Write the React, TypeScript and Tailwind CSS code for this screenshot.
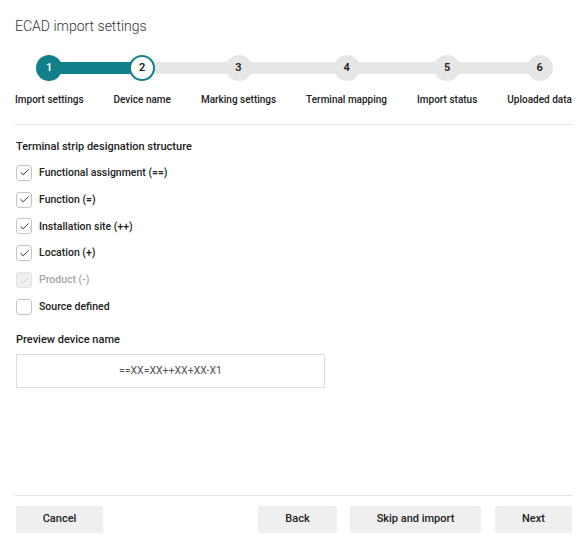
import { Check } from 'lucide-react';

const STEPS = [
  'Import settings',
  'Device name',
  'Marking settings',
  'Terminal mapping',
  'Import status',
  'Uploaded data',
];

const OPTIONS: { label: string; checked: boolean; disabled?: boolean }[] = [
  { label: 'Functional assignment (==)', checked: true },
  { label: 'Function (=)', checked: true },
  { label: 'Installation site (++)', checked: true },
  { label: 'Location (+)', checked: true },
  { label: 'Product (-)', checked: true, disabled: true },
  { label: 'Source defined', checked: false },
];

const CURRENT = 2;

function Stepper() {
  return (
    <div className="relative mt-[18px] flex justify-between">
      {/* track behind the circles */}
      <div className="absolute top-[7px] right-[34px] left-[30px] h-[12px] bg-[#e6e6e6]" />
      <div className="absolute top-[7px] left-[30px] h-[12px] w-[98px] bg-[#12808a]" />
      {STEPS.map((label, i) => {
        const n = i + 1;
        const done = n < CURRENT;
        const active = n === CURRENT;
        return (
          <div key={label} className="relative flex flex-col items-center">
            <div
              className={`flex h-[26px] w-[26px] items-center justify-center rounded-full text-[11px] font-semibold ${
                done
                  ? 'bg-[#12808a] text-white'
                  : active
                    ? 'border-2 border-[#12808a] bg-white text-[#222]'
                    : 'bg-[#e6e6e6] text-[#222]'
              }`}
            >
              {n}
            </div>
            <span className="mt-[11px] text-[10px] font-medium whitespace-nowrap text-[#222]">{label}</span>
          </div>
        );
      })}
    </div>
  );
}

function CheckRow({ label, checked, disabled }: { label: string; checked: boolean; disabled?: boolean }) {
  return (
    <label className="flex h-[26.8px] items-center gap-[7px]">
      <span
        className={`flex h-[16px] w-[16px] items-center justify-center rounded-[3px] border ${
          disabled ? 'border-[#e2e2e2] bg-[#f0f0f0] text-[#cfcfcf]' : 'border-[#c6c6c6] bg-white text-[#222]'
        }`}
      >
        {checked && <Check size={11} strokeWidth={2} />}
      </span>
      <span className={`text-[10.5px] font-medium ${disabled ? 'text-[#a8a8a8]' : 'text-[#222]'}`}>{label}</span>
    </label>
  );
}

function Button({ children, className = '' }: { children: string; className?: string }) {
  return (
    <button
      type="button"
      className={`h-[27px] rounded-[2px] bg-[#efefef] text-[11px] font-medium text-[#222] ${className}`}
    >
      {children}
    </button>
  );
}

export default function App() {
  return (
    <div
      className="flex h-[550px] w-[587px] flex-col bg-white px-[15px] text-[#222]"
      style={{ fontFamily: 'Roboto, "Noto Sans", sans-serif' }}
    >
      <h1 className="mt-[16px] text-[14px] font-light text-[#333]">ECAD import settings</h1>
      <Stepper />
      <div className="mt-[17px] border-t border-[#e4e4e4]" />

      <div className="mt-[14px] pl-[1px]">
        <h2 className="text-[11px] font-medium text-[#222]">Terminal strip designation structure</h2>
        <div className="mt-[4px] flex flex-col">
          {OPTIONS.map((o) => (
            <CheckRow key={o.label} {...o} />
          ))}
        </div>

        <h2 className="mt-[12px] text-[11px] font-medium text-[#222]">Preview device name</h2>
        <div className="mt-[5px] flex h-[34px] w-[309px] items-center justify-center border border-[#dcdcdc] text-[10.5px] text-[#555]">
          ==XX=XX++XX+XX-X1
        </div>
      </div>

      <div className="mt-auto border-t border-[#e4e4e4]" />
      <div className="mt-[10px] mb-[17px] flex items-center pl-[1px]">
        <Button className="w-[87px]">Cancel</Button>
        <div className="flex-1" />
        <Button className="w-[79px]">Back</Button>
        <Button className="ml-[13px] w-[131px]">Skip and import</Button>
        <Button className="ml-[14px] w-[77px]">Next</Button>
      </div>
    </div>
  );
}
